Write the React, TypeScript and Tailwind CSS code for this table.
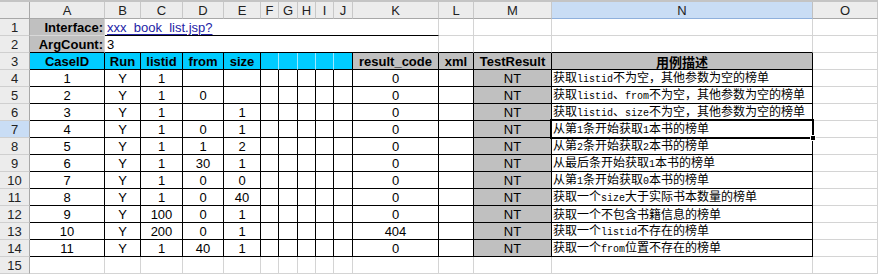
import React from "react";

const W: Record<string, string> = {
  rh: "w-[30px]",
  A: "w-[75px]",
  B: "w-[36px]",
  C: "w-[42px]",
  D: "w-[41px]",
  E: "w-[37px]",
  F: "w-[18px]",
  G: "w-[19px]",
  H: "w-[18px]",
  I: "w-[18px]",
  J: "w-[19px]",
  K: "w-[86px]",
  L: "w-[35px]",
  M: "w-[78px]",
  N: "w-[261px]",
  O: "flex-1",
};

const LETTERS = ["A", "B", "C", "D", "E", "F", "G", "H", "I", "J", "K", "L", "M", "N", "O"];

const GRID = "border-r-[#d4d4d4] border-b-[#d4d4d4]";
const BLACK = "border-r-black border-b-black";

function Cell({ w, cls = "", children }: { w: string; cls?: string; children?: React.ReactNode }) {
  return (
    <div
      className={`${w} shrink-0 h-full border-r border-b flex items-center whitespace-nowrap leading-[15px] ${cls}`}
    >
      {children}
    </div>
  );
}

function RowHead({ n, active = false }: { n: number; active?: boolean }) {
  return (
    <Cell
      w={W.rh}
      cls={`justify-center text-[13px] text-[#222] border-r-[#a8a8a8] border-b-[#cfcfcf] ${
        active ? "bg-[#c9ddf5]" : "bg-[#ececec]"
      }`}
    >
      {n}
    </Cell>
  );
}

function Desc({ t }: { t: string }) {
  const parts = t.split(/([A-Za-z0-9]+)/);
  return (
    <span className="font-['Noto_Sans_CJK_SC',sans-serif] text-[12px] leading-[14px]">
      {parts.map((p, i) =>
        /^[A-Za-z0-9]+$/.test(p) ? (
          <span key={i} className="font-['Liberation_Mono',monospace] text-[10px]">
            {p}
          </span>
        ) : (
          <span key={i}>{p}</span>
        )
      )}
    </span>
  );
}

const DATA: string[][] = [
  ["1", "Y", "1", "", "", "0", "获取listid不为空，其他参数为空的榜单"],
  ["2", "Y", "1", "0", "", "0", "获取listid、from不为空，其他参数为空的榜单"],
  ["3", "Y", "1", "", "1", "0", "获取listid、size不为空，其他参数为空的榜单"],
  ["4", "Y", "1", "0", "1", "0", "从第1条开始获取1本书的榜单"],
  ["5", "Y", "1", "1", "2", "0", "从第2条开始获取2本书的榜单"],
  ["6", "Y", "1", "30", "1", "0", "从最后条开始获取1本书的榜单"],
  ["7", "Y", "1", "0", "0", "0", "从第1条开始获取0本书的榜单"],
  ["8", "Y", "1", "0", "40", "0", "获取一个size大于实际书本数量的榜单"],
  ["9", "Y", "100", "0", "1", "0", "获取一个不包含书籍信息的榜单"],
  ["10", "Y", "200", "0", "1", "404", "获取一个listid不存在的榜单"],
  ["11", "Y", "1", "40", "1", "0", "获取一个from位置不存在的榜单"],
];

export default function App() {
  return (
    <div className="w-[878px] h-[275px] overflow-hidden bg-white font-['Liberation_Sans',Arial,sans-serif] text-[13px] text-black">
      <div className="relative border-t-2 border-t-[#c4c4c4]">
        {/* Column headers */}
        <div className="flex h-[17px]">
          <Cell w={W.rh} cls="bg-[#ececec] border-r-[#a8a8a8] border-b-[#a8a8a8]" />
          {LETTERS.map((l) => (
            <Cell
              key={l}
              w={W[l]}
              cls={`justify-center text-[13px] text-[#222] ${
                l === "N"
                  ? "bg-[#c9ddf5] border-r-[#c0c0c0] border-b-[#8fb0dc]"
                  : "bg-[#ececec] border-r-[#c8c8c8] border-b-[#a8a8a8]"
              }`}
            >
              {l}
            </Cell>
          ))}
        </div>

        {/* Row 1 */}
        <div className="flex h-[17px]">
          <RowHead n={1} />
          <Cell w={W.A} cls="bg-[#c0c0c0] justify-end pr-[1px] font-bold border-r-[#d4d4d4] border-b-[#d8d8d8]">
            Interface:
          </Cell>
          <Cell w="w-[334px]" cls="pl-[2px] border-r-[#d4d4d4] border-b-black">
            <span className="text-[#2323a6] underline underline-offset-[2px]">xxx_book_list.jsp?</span>
          </Cell>
          <Cell w={W.L} cls={GRID} />
          <Cell w={W.M} cls={GRID} />
          <Cell w={W.N} cls={GRID} />
          <Cell w={W.O} cls={GRID} />
        </div>

        {/* Row 2 */}
        <div className="flex h-[17px]">
          <RowHead n={2} />
          <Cell w={W.A} cls="bg-[#c0c0c0] justify-end pr-[1px] font-bold border-r-[#d4d4d4] border-b-black">
            ArgCount:
          </Cell>
          <Cell w="w-[334px]" cls="pl-[2px] border-r-[#d4d4d4] border-b-black">
            3
          </Cell>
          <Cell w={W.L} cls="border-r-[#d4d4d4] border-b-black" />
          <Cell w={W.M} cls="border-r-[#d4d4d4] border-b-black" />
          <Cell w={W.N} cls="border-r-[#d4d4d4] border-b-black" />
          <Cell w={W.O} cls={GRID} />
        </div>

        {/* Row 3 */}
        <div className="flex h-[17px]">
          <RowHead n={3} />
          <Cell w={W.A} cls={`bg-[#00ccff] justify-center font-bold ${BLACK}`}>CaseID</Cell>
          <Cell w={W.B} cls={`bg-[#00ccff] justify-center font-bold ${BLACK}`}>Run</Cell>
          <Cell w={W.C} cls={`bg-[#00ccff] justify-center font-bold ${BLACK}`}>listid</Cell>
          <Cell w={W.D} cls={`bg-[#00ccff] justify-center font-bold ${BLACK}`}>from</Cell>
          <Cell w={W.E} cls={`bg-[#00ccff] justify-center font-bold ${BLACK}`}>size</Cell>
          <Cell w={W.F} cls="bg-[#00ccff] border-r-[#9ee9ff] border-b-black" />
          <Cell w={W.G} cls="bg-[#00ccff] border-r-[#9ee9ff] border-b-black" />
          <Cell w={W.H} cls="bg-[#00ccff] border-r-[#9ee9ff] border-b-black" />
          <Cell w={W.I} cls="bg-[#00ccff] border-r-[#9ee9ff] border-b-black" />
          <Cell w={W.J} cls={`bg-[#00ccff] ${BLACK}`} />
          <Cell w={W.K} cls={`bg-[#c0c0c0] justify-center font-bold ${BLACK}`}>result_code</Cell>
          <Cell w={W.L} cls={`bg-[#c0c0c0] justify-center font-bold ${BLACK}`}>xml</Cell>
          <Cell w={W.M} cls={`bg-[#c0c0c0] justify-center font-bold ${BLACK}`}>TestResult</Cell>
          <Cell w={W.N} cls={`bg-[#c0c0c0] justify-center ${BLACK}`}>
            <span className="font-['Noto_Sans_CJK_SC',sans-serif] font-bold text-[13px] leading-[13px]">用例描述</span>
          </Cell>
          <Cell w={W.O} cls={GRID} />
        </div>

        {/* Data rows 4-14 */}
        {DATA.map((r, i) => (
          <div key={i} className="flex h-[17px]">
            <RowHead n={i + 4} active={i + 4 === 7} />
            <Cell w={W.A} cls={`justify-center ${BLACK}`}>{r[0]}</Cell>
            <Cell w={W.B} cls={`justify-center ${BLACK}`}>{r[1]}</Cell>
            <Cell w={W.C} cls={`justify-center ${BLACK}`}>{r[2]}</Cell>
            <Cell w={W.D} cls={`justify-center ${BLACK}`}>{r[3]}</Cell>
            <Cell w={W.E} cls={`justify-center ${BLACK}`}>{r[4]}</Cell>
            <Cell w={W.F} cls={BLACK} />
            <Cell w={W.G} cls={BLACK} />
            <Cell w={W.H} cls={BLACK} />
            <Cell w={W.I} cls={BLACK} />
            <Cell w={W.J} cls={BLACK} />
            <Cell w={W.K} cls={`justify-center ${BLACK}`}>{r[5]}</Cell>
            <Cell w={W.L} cls={BLACK} />
            <Cell w={W.M} cls={`bg-[#c0c0c0] justify-center ${BLACK}`}>NT</Cell>
            <Cell w={W.N} cls={`pl-[1px] ${BLACK}`}>
              <Desc t={r[6]} />
            </Cell>
            <Cell w={W.O} cls={GRID} />
          </div>
        ))}

        {/* Row 15 */}
        <div className="flex h-[17px]">
          <RowHead n={15} />
          {LETTERS.map((l) => (
            <Cell key={l} w={W[l]} cls={GRID} />
          ))}
        </div>

        {/* Selection on N7 */}
        <div className="absolute left-[550px] top-[117px] w-[264px] h-[20px] border-2 border-black pointer-events-none" />
        <div className="absolute left-[810px] top-[133px] w-[6px] h-[6px] bg-black border border-white pointer-events-none" />
      </div>
    </div>
  );
}
